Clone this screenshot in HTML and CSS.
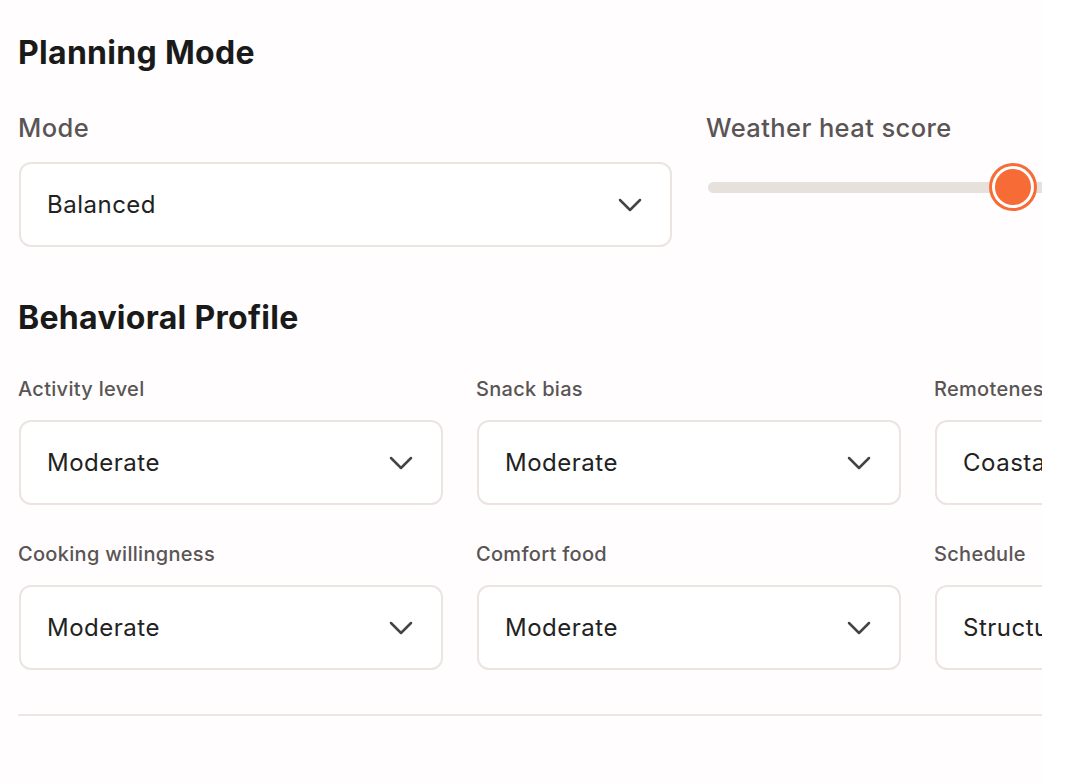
FILE: index.html
```html
<!DOCTYPE html>
<html>

<head>
    <meta charset="utf-8">
    <meta name="viewport" content="width=device-width, initial-scale=1">
    <title>Planning Mode</title>
    <link rel="stylesheet" href="styles.css">
</head>

<body>
    <div class="panel">
        <h2 class="section-title first">Planning Mode</h2>
        <div class="mode-row">
            <div class="field">
                <label class="field-label big-label">Mode</label>
                <div class="select select-tall">
                    <span class="select-value">Balanced</span>
                    <svg class="chevron" viewBox="0 0 24 14" width="24" height="14"><path d="M2 2 L12 12 L22 2" /></svg>
                </div>
            </div>
            <div class="field">
                <label class="field-label big-label">Weather heat score</label>
                <div class="slider">
                    <div class="slider-track"></div>
                    <div class="slider-thumb" style="left: 289px"></div>
                </div>
            </div>
        </div>

        <h2 class="section-title">Behavioral Profile</h2>
        <div class="profile-grid">
            <div class="field">
                <label class="field-label">Activity level</label>
                <div class="select">
                    <span class="select-value">Moderate</span>
                    <svg class="chevron" viewBox="0 0 24 14" width="24" height="14"><path d="M2 2 L12 12 L22 2" /></svg>
                </div>
            </div>
            <div class="field">
                <label class="field-label">Snack bias</label>
                <div class="select">
                    <span class="select-value">Moderate</span>
                    <svg class="chevron" viewBox="0 0 24 14" width="24" height="14"><path d="M2 2 L12 12 L22 2" /></svg>
                </div>
            </div>
            <div class="field">
                <label class="field-label">Remoteness</label>
                <div class="select">
                    <span class="select-value">Coastal</span>
                    <svg class="chevron" viewBox="0 0 24 14" width="24" height="14"><path d="M2 2 L12 12 L22 2" /></svg>
                </div>
            </div>
            <div class="field">
                <label class="field-label">Cooking willingness</label>
                <div class="select">
                    <span class="select-value">Moderate</span>
                    <svg class="chevron" viewBox="0 0 24 14" width="24" height="14"><path d="M2 2 L12 12 L22 2" /></svg>
                </div>
            </div>
            <div class="field">
                <label class="field-label">Comfort food</label>
                <div class="select">
                    <span class="select-value">Moderate</span>
                    <svg class="chevron" viewBox="0 0 24 14" width="24" height="14"><path d="M2 2 L12 12 L22 2" /></svg>
                </div>
            </div>
            <div class="field">
                <label class="field-label">Schedule</label>
                <div class="select">
                    <span class="select-value">Structured</span>
                    <svg class="chevron" viewBox="0 0 24 14" width="24" height="14"><path d="M2 2 L12 12 L22 2" /></svg>
                </div>
            </div>
        </div>
        <div class="divider"></div>
    </div>
</body>

</html>
```

FILE: styles.css
```css
body {
    margin: 0;
    background-color: #ffffff;
    font-family: Inter, "Open Sans", sans-serif;
}

.panel {
    width: 1042px;
    height: 783px;
    overflow: hidden;
    background-color: #fffdfd;
    padding: 33px 0 0 18px;
    box-sizing: border-box;
}

.section-title {
    margin: 0;
    font-size: 32px;
    line-height: 40px;
    font-weight: 700;
    letter-spacing: 0.3px;
    color: #1b1a1a;
    white-space: nowrap;
}

.mode-row {
    display: grid;
    grid-template-columns: 654px 654px;
    column-gap: 34px;
    margin-top: 41px;
    margin-bottom: 51px;
}

.field {
    display: flex;
    flex-direction: column;
    min-width: 0;
}

.field-label {
    font-size: 20px;
    line-height: 24px;
    font-weight: 500;
    letter-spacing: 0.3px;
    color: #5a5555;
    white-space: nowrap;
    margin-bottom: 19px;
}

.big-label {
    font-size: 25.5px;
    line-height: 28px;
    letter-spacing: 0.4px;
    margin-bottom: 20px;
}

.select {
    height: 85px;
    box-sizing: border-box;
    border: 2px solid #ebe4e0;
    border-radius: 12px;
    background-color: #ffffff;
    display: flex;
    align-items: center;
    justify-content: space-between;
    padding: 0 28px 0 26px;
    margin-left: 1px;
}

.select-value {
    font-size: 24px;
    letter-spacing: 0.5px;
    color: #222222;
    white-space: nowrap;
}

.chevron {
    flex: none;
    fill: none;
    stroke: #444444;
    stroke-width: 2.5;
    stroke-linecap: round;
    stroke-linejoin: round;
}

.slider {
    position: relative;
    height: 50px;
    margin-top: 1px;
}

.slider-track {
    margin: 19px 0 0 2px;
    height: 11px;
    border-radius: 6px;
    background-color: #e7e1dc;
}

.slider-thumb {
    position: absolute;
    top: 6px;
    width: 36px;
    height: 36px;
    border-radius: 50%;
    background-color: #f76b37;
    box-shadow: 0 0 0 3px #ffffff, 0 0 0 6px #f76b37;
}

.profile-grid {
    display: grid;
    grid-template-columns: 425px 425px 425px;
    column-gap: 33px;
    row-gap: 37px;
    margin-top: 39px;
}

.divider {
    height: 2px;
    background-color: #ede7e3;
    margin-top: 44px;
}
```
